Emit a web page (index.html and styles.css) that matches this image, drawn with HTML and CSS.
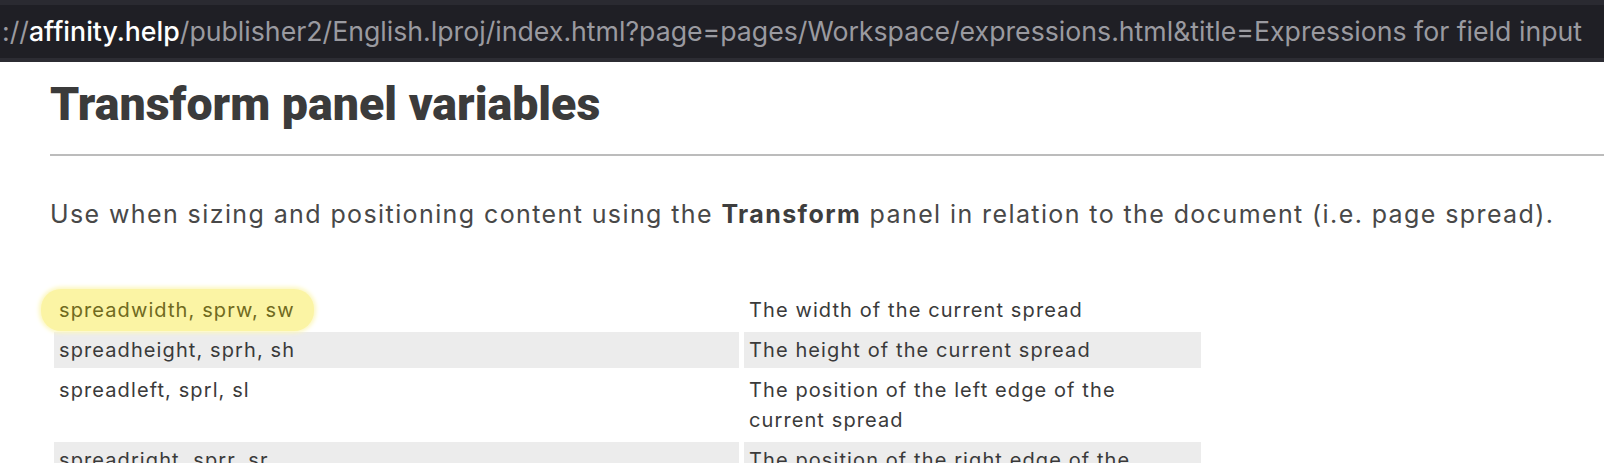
FILE: index.html
```html
<!DOCTYPE html>
<html lang="en">
<head>
<meta charset="utf-8">
<title>Transform panel variables</title>
<link rel="stylesheet" href="styles.css">
</head>
<body>
<div class="urlbar"><span class="dim">://</span><span class="host">affinity.help</span><span class="dim">/publisher2/English.lproj/index.html?page=pages/Workspace/expressions.html&amp;title=Expressions for field input</span></div>
<main class="content">
  <h1 class="title">Transform panel variables</h1>
  <hr class="rule">
  <p class="intro">Use when sizing and positioning content using the <b>Transform</b> panel in relation to the document (i.e. page spread).</p>
  <table class="vars">
    <tr><td class="name"><span class="hl">spreadwidth, sprw, sw</span></td><td class="desc">The width of the current spread</td></tr>
    <tr class="alt"><td class="name">spreadheight, sprh, sh</td><td class="desc">The height of the current spread</td></tr>
    <tr><td class="name">spreadleft, sprl, sl</td><td class="desc">The position of the left edge of the current spread</td></tr>
    <tr class="alt"><td class="name">spreadright, sprr, sr</td><td class="desc">The position of the right edge of the current spread</td></tr>
  </table>
</main>
</body>
</html>
```

FILE: styles.css
```css
html, body {
  margin: 0;
  padding: 0;
  background: #ffffff;
  overflow: hidden;
}
body {
  font-family: Inter, Roboto, "Liberation Sans", sans-serif;
}
.urlbar {
  box-sizing: border-box;
  height: 62px;
  background: #1f1f25;
  border-top: 5px solid #2a2a31;
  border-bottom: 4px solid #2c2c33;
  padding-left: 2px;
  font-family: Inter, Roboto, sans-serif;
  font-size: 26.7px;
  line-height: 53px;
  white-space: nowrap;
  overflow: hidden;
  color: #9a9aa0;
}
.urlbar .host {
  color: #ffffff;
  font-weight: 500;
}
.content {
  padding-left: 50px;
}
.title {
  margin: 0;
  padding-top: 18px;
  font-family: Roboto, sans-serif;
  font-weight: 900;
  font-size: 46.5px;
  line-height: 48px;
  color: #3b3b3b;
}
.rule {
  margin: 26px 0 0 0;
  border: 0;
  height: 2px;
  background: #bcbcbc;
}
.intro {
  margin: 42px 0 0 0;
  font-size: 25px;
  letter-spacing: 1.4px;
  line-height: 32px;
  color: #484848;
}
.intro b {
  color: #3e3e3e;
}
.vars {
  margin-top: 58px;
  border-spacing: 5px 4px;
  margin-left: -1px;
  font-size: 20px;
  letter-spacing: 1.1px;
  line-height: 30px;
  color: #3a3a3a;
}
.vars td {
  padding: 3px 5px;
  vertical-align: top;
}
.vars .name {
  width: 675px;
}
.vars .desc {
  width: 447px;
}
.vars .alt td {
  background: #ececec;
}
.hl {
  display: inline-block;
  margin: -6px 0 -6px -18px;
  padding: 6px 19px 6px 18px;
  border-radius: 20px;
  background: #fbf4a4;
  box-shadow: 0 0 4px 2px #fcf7bd;
  color: #706a1e;
}
```
